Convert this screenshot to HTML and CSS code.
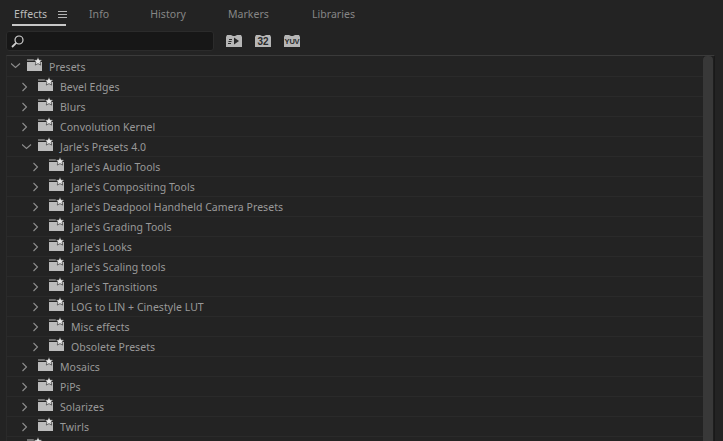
FILE: index.html
```html
<!DOCTYPE html>
<html lang="en">
<head>
    <meta charset="UTF-8">
    <title>Effects</title>
    <link rel="stylesheet" href="styles.css">
</head>
<body>
    <div class="tabs">
        <div class="tab active">
            <span>Effects</span>
            <svg class="menu-icon" width="9" height="7" viewBox="0 0 9 7"><path d="M0 .5h9M0 3.500h9M0 6.500h9" stroke="#b4b4b4" fill="none"/></svg>
        </div>
        <div class="tab info">Info</div>
        <div class="tab">History</div>
        <div class="tab markers">Markers</div>
        <div class="tab">Libraries</div>
    </div>

    <div class="toolbar">
        <div class="search">
            <svg width="13" height="13" viewBox="0 0 13 13"><circle cx="8" cy="5" r="4" stroke="#d0d0d0" stroke-width="1.200" fill="none"/><path d="M5.200 7.800L1 12" stroke="#d0d0d0" stroke-width="1.800" fill="none"/></svg>
        </div>
        <div class="filters">
            <div class="filter">
                <svg width="16" height="13" viewBox="0 0 16 13"><path d="M0 13V3l1-2h4l2 1h2l2-1h4l1 2v10z" fill="#b6b6b6"/><path d="M3 5.500h3M2.500 7.500h3M2 9.500h3" stroke="#2a2a2a" fill="none"/><path d="M8 3.500l5 3.500-5 3.500z" fill="#2a2a2a"/></svg>
            </div>
            <div class="filter">
                <svg width="16" height="13" viewBox="0 0 16 13"><path d="M0 13V3l1-2h4l2 1h2l2-1h4l1 2v10z" fill="#b6b6b6"/></svg>
                <span class="filter-label">32</span>
            </div>
            <div class="filter">
                <svg width="16" height="13" viewBox="0 0 16 13"><path d="M0 13V3l1-2h4l2 1h2l2-1h4l1 2v10z" fill="#b6b6b6"/></svg>
                <span class="filter-label small">YUV</span>
            </div>
        </div>
    </div>

    <div class="tree-wrap">
        <div class="tree" id="tree"></div>
        <div class="scrollbar"><div class="thumb"></div></div>
    </div>

    <script src="tree.js"></script>
</body>
</html>
```

FILE: tree.js
```js
(function () {
    var rows = [
        [0, "Presets", true],
        [1, "Bevel Edges"],
        [1, "Blurs"],
        [1, "Convolution Kernel"],
        [1, "Jarle's Presets 4.0", true],
        [2, "Jarle's Audio Tools"],
        [2, "Jarle's Compositing Tools"],
        [2, "Jarle's Deadpool Handheld Camera Presets"],
        [2, "Jarle's Grading Tools"],
        [2, "Jarle's Looks"],
        [2, "Jarle's Scaling tools"],
        [2, "Jarle's Transitions"],
        [2, "LOG to LIN + Cinestyle LUT"],
        [2, "Misc effects"],
        [2, "Obsolete Presets"],
        [1, "Mosaics"],
        [1, "PiPs"],
        [1, "Solarizes"],
        [1, "Twirls"],
        [0, ""]
    ];

    var shut = '<path d="M.5 1l4 4-4 4" stroke="#8e8e8e" stroke-width="1.100" fill="none"/>';
    var expanded = '<path d="M0 2.500l4.500 4 4.500-4" stroke="#8e8e8e" stroke-width="1.100" fill="none"/>';
    var folder = '<path d="M0 14V5h15v9z" fill="#bcbcbc"/><path d="M0 2.500h7v1H0z" fill="#bcbcbc"/>' +
        '<path d="M11 0l1.300 2.800 3 .3-2.200 2 .6 3-2.700-1.500-2.700 1.500.6-3-2.200-2 3-.3z" fill="#e6e6e6" stroke="#232323" stroke-width=".6"/>';

    var html = "";
    rows.forEach(function (r) {
        html += '<div class="row level-' + r[0] + '">' +
            '<svg class="twist" width="10" height="10" viewBox="0 0 10 10">' + (r[2] ? expanded : shut) + '</svg>' +
            '<svg class="folder" width="16" height="14" viewBox="0 0 16 14">' + folder + '</svg>' +
            '<span class="name">' + r[1] + '</span></div>';
    });
    document.getElementById("tree").innerHTML = html;
})();
```

FILE: styles.css
```css
* {
    margin: 0;
    padding: 0;
    box-sizing: border-box;
}

html, body {
    height: 100%;
    overflow: hidden;
}

body {
    background: #232323;
    color: #999;
    font-family: "Noto Sans", sans-serif;
    font-size: 10.5px;
    letter-spacing: 0.05px;
}

.tabs {
    display: flex;
    height: 26px;
    padding-left: 12px;
    align-items: flex-start;
}

.tab {
    height: 26px;
    padding: 7px 2px 0;
    line-height: 15px;
    color: #868686;
    margin-right: 38px;
}

.tab.info {
    margin-right: 37px;
}

.tab.markers {
    margin-right: 39px;
}

.tab.active {
    display: flex;
    gap: 11px;
    color: #bcbcbc;
    border-bottom: 2px solid #c8c8c8;
    width: 54px;
    margin-right: 21px;
}

.menu-icon {
    flex: none;
    margin-top: 4px;
}

.toolbar {
    display: flex;
    align-items: center;
    height: 29px;
    padding-left: 6px;
}

.search {
    width: 208px;
    height: 20px;
    background: #171717;
    border: 1px solid #2b2b2b;
    border-radius: 3px;
    padding: 3px 0 0 4px;
}

.filters {
    display: flex;
    gap: 13px;
    margin-left: 12px;
}

.filter {
    position: relative;
    width: 16px;
    height: 13px;
}

.filter svg {
    display: block;
}

.filter-label {
    position: absolute;
    left: 0;
    right: 0;
    top: 2px;
    text-align: center;
    font-family: "Liberation Sans", sans-serif;
    font-weight: bold;
    font-size: 10px;
    line-height: 11px;
    color: #2a2a2a;
}

.filter-label.small {
    font-size: 7.5px;
    letter-spacing: -0.2px;
}

.tree-wrap {
    display: flex;
    height: 386px;
    margin-left: 6px;
    width: 709px;
    border-top: 1px solid #3a3a3a;
    border-left: 1px solid #2a2a2a;
    border-right: 1px solid #191919;
}

.tree {
    flex: 1;
    overflow: hidden;
}

.row {
    display: flex;
    align-items: center;
    height: 20px;
    border-bottom: 1px solid #2a2a2a;
}

.row:first-child {
    height: 21px;
}

.level-0 { padding-left: 4px; }
.level-1 { padding-left: 15px; }
.level-2 { padding-left: 26px; }

.twist {
    flex: none;
}

.folder {
    flex: none;
    margin-left: 6px;
    margin-top: -5px;
}

.name {
    margin-left: 6px;
    padding-top: 2px;
    line-height: 15px;
}

.scrollbar {
    width: 11px;
    flex: none;
    background: #1e1e1e;
    padding-right: 1px;
}

.thumb {
    height: 100%;
    background: #383838;
    border-radius: 4px 4px 0 0;
}
```
